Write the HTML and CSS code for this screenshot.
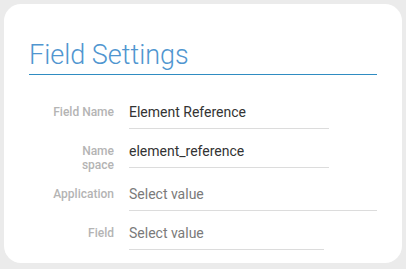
FILE: index.html
```html
<!DOCTYPE html>
<html>
    <head>
        <meta charset="utf-8">
        <title>Field Settings</title>
        <link rel="stylesheet" href="styles.css">
    </head>
    <body>
        <div class="settings_card">
            <h1 class="settings_title">Field Settings</h1>
            <div class="settings_form">
                <div class="settings_row">
                    <label class="settings_label">Field Name</label>
                    <div class="settings_field settings_field_short">Element Reference</div>
                </div>
                <div class="settings_row">
                    <label class="settings_label">Name<br>space</label>
                    <div class="settings_field settings_field_short">element_reference</div>
                </div>
                <div class="settings_row">
                    <label class="settings_label">Application</label>
                    <div class="settings_field settings_field_full settings_empty">Select value</div>
                </div>
                <div class="settings_row">
                    <label class="settings_label">Field</label>
                    <div class="settings_field settings_field_select settings_empty">Select value</div>
                </div>
            </div>
        </div>
    </body>
</html>
```

FILE: styles.css
```css
html, body {
    margin: 0;
    padding: 0;
}
body {
    background-color: #ebebeb;
    font-family: Roboto, "Liberation Sans", sans-serif;
    padding: 4px;
    height: 269px;
    box-sizing: border-box;
}
.settings_card {
    width: 398px;
    height: 259px;
    box-sizing: border-box;
    background-color: #fff;
    border-radius: 17px;
    padding: 35px 25px 0 25px;
}
.settings_title {
    margin: 0;
    font-size: 27px;
    font-weight: 300;
    line-height: 32px;
    color: #5096d0;
    padding-bottom: 3px;
    border-bottom: 1px solid #2f8cc2;
}
.settings_form {
    display: flex;
    flex-direction: column;
    gap: 12px;
    margin-top: 27px;
}
.settings_row {
    display: flex;
    align-items: flex-start;
    gap: 15px;
}
.settings_label {
    width: 85px;
    flex-shrink: 0;
    text-align: right;
    padding-top: 3px;
    font-size: 12px;
    line-height: 14px;
    font-weight: 500;
    color: #b4b4b4;
}
.settings_field {
    font-size: 14px;
    line-height: 20px;
    color: #333;
    padding-bottom: 6px;
    border-bottom: 1px solid #dcdcdc;
}
.settings_field_short {
    width: 200px;
}
.settings_field_full {
    flex: 1;
}
.settings_field_select {
    width: 195px;
}
.settings_empty {
    color: #7a7a7a;
}
```
